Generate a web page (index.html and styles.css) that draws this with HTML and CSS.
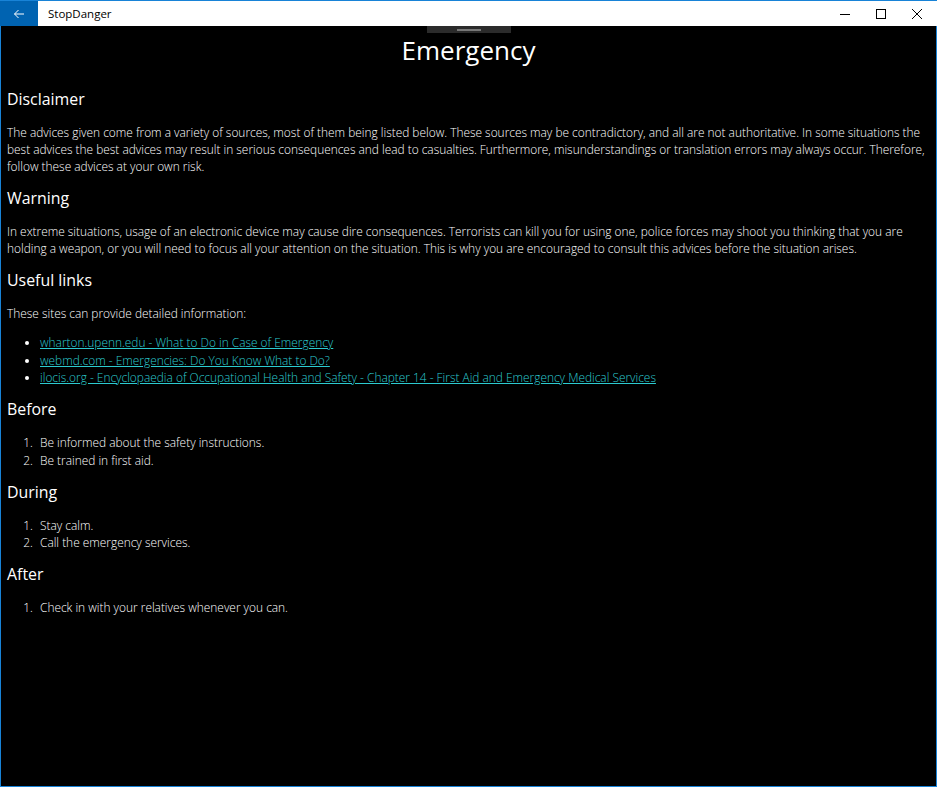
FILE: index.html
```html
<!DOCTYPE html>
<html lang="en">
<head>
  <meta charset="UTF-8" />
  <title>StopDanger</title>
  <link rel="stylesheet" href="styles.css">
</head>
<body>
  <div class="window">
    <div class="titlebar">
      <div class="back">
        <svg width="12" height="12" viewBox="0 0 12 12"><path d="M11 6H1.5M5.5 2L1.5 6l4 4" fill="none" stroke="#fff" stroke-width="1"/></svg>
      </div>
      <div class="app-title">StopDanger</div>
      <div class="controls">
        <span class="ctl"><svg width="10" height="10" viewBox="0 0 10 10"><path d="M0 5.5h10" stroke="#000" stroke-width="1"/></svg></span>
        <span class="ctl"><svg width="10" height="10" viewBox="0 0 10 10"><rect x="0.5" y="0.5" width="9" height="9" fill="none" stroke="#000" stroke-width="1"/></svg></span>
        <span class="ctl"><svg width="10" height="10" viewBox="0 0 10 10"><path d="M0 0L10 10M10 0L0 10" stroke="#000" stroke-width="1"/></svg></span>
      </div>
    </div>

    <div class="content">
      <div class="handle"><span></span></div>
      <h1>Emergency</h1>

      <h2>Disclaimer</h2>
      <p>The advices given come from a variety of sources, most of them being listed below. These sources may be contradictory, and all are not authoritative. In some situations the best advices the best advices may result in serious consequences and lead to casualties. Furthermore, misunderstandings or translation errors may always occur. Therefore, follow these advices at your own risk.</p>

      <h2>Warning</h2>
      <p>In extreme situations, usage of an electronic device may cause dire consequences. Terrorists can kill you for using one, police forces may shoot you thinking that you are holding a weapon, or you will need to focus all your attention on the situation. This is why you are encouraged to consult this advices before the situation arises.</p>

      <h2>Useful links</h2>
      <p>These sites can provide detailed information:</p>
      <ul>
        <li><a href="#">wharton.upenn.edu - What to Do in Case of Emergency</a></li>
        <li><a href="#">webmd.com - Emergencies: Do You Know What to Do?</a></li>
        <li><a href="#">ilocis.org - Encyclopaedia of Occupational Health and Safety - Chapter 14 - First Aid and Emergency Medical Services</a></li>
      </ul>

      <h2>Before</h2>
      <ol>
        <li>Be informed about the safety instructions.</li>
        <li>Be trained in first aid.</li>
      </ol>

      <h2>During</h2>
      <ol>
        <li>Stay calm.</li>
        <li>Call the emergency services.</li>
      </ol>

      <h2>After</h2>
      <ol>
        <li>Check in with your relatives whenever you can.</li>
      </ol>
    </div>
  </div>
</body>
</html>
```

FILE: styles.css
```css
html, body {
  margin: 0;
  padding: 0;
  height: 100%;
}
body {
  font-family: "Open Sans", "Noto Sans", sans-serif;
  background: #000;
  color: #fff;
}
.window {
  box-sizing: border-box;
  height: 100%;
  border: 1px solid #1883d7;
  border-top: none;
  display: flex;
  flex-direction: column;
  background: #000;
}
.titlebar {
  height: 25px;
  background: #fff;
  color: #000;
  display: flex;
  align-items: center;
  border-top: 1px solid #1883d7;
  margin: 0 -1px;
}
.back {
  width: 38px;
  height: 100%;
  background: #0063b1;
  display: flex;
  align-items: center;
  justify-content: center;
}
.app-title {
  font-size: 11.5px;
  margin-left: 10px;
  flex: 1;
}
.controls {
  display: flex;
  height: 100%;
  margin-right: 2px;
}
.ctl {
  width: 36px;
  display: flex;
  align-items: center;
  justify-content: center;
}
.content {
  flex: 1;
  padding: 0 6px;
  font-weight: 300;
  font-size: 11.9px;
  line-height: 17px;
}
.handle {
  width: 84px;
  height: 7px;
  margin: 0 auto;
  background: #2b2b2b;
  display: flex;
  align-items: center;
  justify-content: center;
}
.handle span {
  width: 24px;
  height: 2px;
  background: #777;
}
h1 {
  margin: 0 0 20px;
  text-align: center;
  font-size: 26px;
  font-weight: 400;
  line-height: 34px;
}
h2 {
  margin: 11px 0 13px;
  font-size: 15.9px;
  font-weight: 500;
  line-height: 24px;
}
ul + h2,
ol + h2 {
  margin-top: 10.5px;
}
p {
  margin: 0;
}
ul, ol {
  margin: 12px 0 0;
  padding-left: 33px;
}
ol {
  padding-left: 29px;
}
ol li {
  padding-left: 4px;
}
li {
  line-height: 17.5px;
}
ul li::marker {
  font-size: 11px;
}
a {
  color: #2ccbd0;
}
```
